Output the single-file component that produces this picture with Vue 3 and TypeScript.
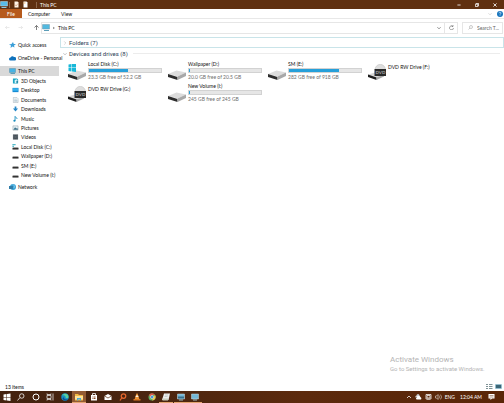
<script setup lang="ts">
import { ref } from 'vue'

interface Drive {
  name: string
  kind: 'system' | 'disk' | 'dvd'
  used?: number
  space?: string
}

const search = ref('')

const folders = [
  { name: '3D Objects', icon: 'cube' },
  { name: 'Desktop', icon: 'desktop' },
  { name: 'Documents', icon: 'doc' },
  { name: 'Downloads', icon: 'down' },
  { name: 'Music', icon: 'music' },
  { name: 'Pictures', icon: 'pic' },
  { name: 'Videos', icon: 'video' },
  { name: 'Local Disk (C:)', icon: 'sysdrive' },
  { name: 'Wallpaper (D:)', icon: 'drive' },
  { name: 'SM (E:)', icon: 'drive' },
  { name: 'New Volume (I:)', icon: 'drive' },
]

const drives: Drive[] = [
  { name: 'Local Disk (C:)', kind: 'system', used: 54, space: '23.3 GB free of 52.2 GB' },
  { name: 'Wallpaper (D:)', kind: 'disk', used: 2, space: '20.0 GB free of 20.5 GB' },
  { name: 'SM (E:)', kind: 'disk', used: 69, space: '282 GB free of 918 GB' },
  { name: 'DVD RW Drive (F:)', kind: 'dvd' },
  { name: 'DVD RW Drive (G:)', kind: 'dvd' },
  { name: 'New Volume (I:)', kind: 'disk', used: 1, space: '245 GB free of 245 GB' },
]

const apps = [
  { id: 'start', label: 'Start' },
  { id: 'search', label: 'Search' },
  { id: 'cortana', label: 'Cortana' },
  { id: 'taskview', label: 'Task View' },
  { id: 'edge', label: 'Edge' },
  { id: 'explorer', label: 'File Explorer', open: true, active: true },
  { id: 'store', label: 'Store' },
  { id: 'mail', label: 'Mail' },
  { id: 'find', label: 'Finder' },
  { id: 'vlc', label: 'Media player' },
  { id: 'chrome', label: 'Chrome' },
  { id: 'notes', label: 'Notes', open: true },
  { id: 'monitor', label: 'Monitor', open: true },
  { id: 'screen', label: 'Screen', open: true },
]
</script>

<template>
  <div class="window">
    <header class="titlebar">
      <svg class="pc" viewBox="0 0 16 14"><path d="M1 1h14v9H1z" fill="#58bce8" stroke="#b8dce9" /><path d="M3 12h10v2H3z" fill="#8fc6dc" /></svg>
      <span class="sep"></span>
      <svg class="page" viewBox="0 0 10 14"><path d="M1 1h6l2 2v10H1z" fill="#fff4e8" /><path d="M2 7l2 3 4-5" fill="none" stroke="#c8845c" /></svg>
      <svg class="page" viewBox="0 0 10 14"><path d="M1 1h6l2 2v10H1z" fill="#fff" /><path d="M1 3h4v2H1z" fill="#f2b66c" /></svg>
      <span class="sep late"></span>
      <h1>This PC</h1>
      <div class="winbtns">
        <button aria-label="Minimize"><svg viewBox="0 0 10 10"><path d="M1 5h8" /></svg></button>
        <button aria-label="Restore"><svg viewBox="0 0 10 10"><path d="M1 3h6v6H1zM3 3V1h6v6H7" /></svg></button>
        <button aria-label="Close"><svg viewBox="0 0 10 10"><path d="M1 1l8 8M9 1L1 9" /></svg></button>
      </div>
    </header>

    <nav class="tabs">
      <button class="file">File</button>
      <button>Computer</button>
      <button>View</button>
      <div class="help">
        <svg class="chev" viewBox="0 0 10 10"><path d="M1 3l4 4 4-4" fill="none" stroke="#aaa" /></svg>
        <svg class="q" viewBox="0 0 12 12"><circle cx="6" cy="6" r="6" fill="#1674bd" /><path d="M4 4.500c0-3 4-2.500 4-.2C8 6 6 5.600 6 7.400M6 8.500v1.200" fill="none" stroke="#fff" stroke-width="1.300" /></svg>
      </div>
    </nav>

    <div class="addressrow">
      <div class="arrows">
        <svg viewBox="0 0 10 10"><path d="M9 5H1l3-3M1 5l3 3" stroke="#d4d4d4" /></svg>
        <svg viewBox="0 0 10 10"><path d="M1 5h8L6 2m3 3L6 8" stroke="#d4d4d4" /></svg>
        <svg viewBox="0 0 10 10"><path d="M5 10V1L1 5m4-4l4 4" stroke="#555" stroke-width="1.500" /></svg>
      </div>
      <div class="address">
        <svg class="pc" viewBox="0 0 16 14"><path d="M1 1h14v9H1z" fill="#52b9df" stroke="#7297a8" /><path d="M4 12h10v2H4z" fill="#5b9db8" /></svg>
        <svg class="chev" viewBox="0 0 10 10"><path d="M3 2l4 3-4 3z" fill="#777" /></svg>
        <span>This PC</span>
        <button aria-label="Previous locations"><svg class="chev" viewBox="0 0 10 10"><path d="M1 3l4 4 4-4" fill="none" stroke="#444" stroke-width="1.500" /></svg></button>
      </div>
      <button class="refresh" aria-label="Refresh"><svg viewBox="0 0 10 10"><path d="M8 3a4 4 0 1 0 1 3M8 0v3H5" fill="none" stroke="#666" stroke-width="1.200" /></svg></button>
      <label class="search">
        <svg viewBox="0 0 10 10"><circle cx="6" cy="4" r="3" fill="none" stroke="#999" /><path d="M4 6L1 9" stroke="#999" /></svg>
        <input v-model="search" type="text" aria-label="Search This PC" placeholder="Search T..." />
      </label>
    </div>

    <div class="content">
      <aside>
        <a href="#" class="root"><svg viewBox="0 0 14 12"><path d="M8 0l1.500 4L14 4l-4 3 1 4-4-2-4 3 1-5-4-2 5-1z" fill="#3b9fd8" /></svg>Quick access</a>
        <a href="#" class="root"><svg viewBox="0 0 14 12"><path d="M3 11a3 3 0 0 1 0-6 4 4 0 0 1 7-1 3.500 3.500 0 0 1 2 7z" fill="#0f72bd" /></svg>OneDrive - Personal</a>
        <a href="#" class="root here"><svg viewBox="0 0 14 12"><path d="M1 1h12v8H1z" fill="#45b2e4" stroke="#5d8ea5" /><path d="M3 10h9v2H3z" fill="#5b9db8" /></svg>This PC</a>
        <div class="sub">
          <a v-for="f in folders" :key="f.name" href="#">
            <svg viewBox="0 0 14 14">
              <g v-if="f.icon === 'cube'"><path d="M1 1h9l3 2v10H1z" fill="#1aa5c4" /><path d="M5 5l4-2 4 2v6l-4 2-4-2z" fill="#d6f4fa" /><path d="M9 7v6l4-2V5z" fill="#2588a8" /></g>
              <g v-else-if="f.icon === 'desktop'"><path d="M0 2h14v10H0z" fill="#168bd4" /><path d="M1 3h12v6H1z" fill="#35b0ec" /></g>
              <g v-else-if="f.icon === 'doc'"><path d="M2 1h8l3 3v9H2z" fill="#f7fafb" stroke="#8b9ba5" /><path d="M4 5h6M4 8h7M4 10h7" stroke="#7d9eb2" /></g>
              <path v-else-if="f.icon === 'down'" d="M5 1h4v5h4l-6 7-6-7h4z" fill="#2687c8" />
              <g v-else-if="f.icon === 'music'"><path d="M6 11V1c1 3 5 3 5 6" fill="none" stroke="#168bbd" stroke-width="2" /><circle cx="4.500" cy="11" r="2.500" fill="#168bbd" /></g>
              <g v-else-if="f.icon === 'pic'"><path d="M1 2h12v10H1z" fill="#e5f0f5" stroke="#7b8c94" /><path d="M2 11l4-6 3 3 2-1 2 4z" fill="#3c718a" /></g>
              <g v-else-if="f.icon === 'video'"><path d="M1 1h12v12H1z" fill="#454e56" /><path d="M3 2v11M11 2v11" stroke="#c7cdd1" stroke-dasharray="1 1" /><path d="M5 7h4" stroke="#9daab5" /></g>
              <g v-else><path v-if="f.icon === 'sysdrive'" d="M0 0h3v3H0zM4 0h3v3H4zM0 4h3v3H0z" fill="#27a9bd" /><path d="M2 7h10l2 2v1H0V9z" fill="#bbb" /><path d="M0 9h14v4H0z" fill="#333" /></g>
            </svg>{{ f.name }}
          </a>
        </div>
        <a href="#" class="root"><svg viewBox="0 0 14 12"><circle cx="8" cy="6" r="6" fill="#3ba4d8" /><path d="M0 4h8v6H0z" fill="#317da9" /><path d="M8 1l3 3-1 4" fill="none" stroke="#bce6f7" /></svg>Network</a>
      </aside>

      <main>
        <h2 class="group boxed"><svg class="chev" viewBox="0 0 10 10"><path d="M3 1l4 4-4 4" fill="none" stroke="#999" /></svg>Folders (7)</h2>
        <h2 class="group"><svg class="chev" viewBox="0 0 10 10"><path d="M1 3l4 4 4-4" fill="none" stroke="#666" /></svg>Devices and drives (8)<span class="rule"></span></h2>
        <div class="drives">
          <article v-for="d in drives" :key="d.name" :class="{ dvd: d.kind === 'dvd' }">
            <svg class="drive" viewBox="0 0 36 32">
              <g v-if="d.kind === 'dvd'"><path d="M0 21l14-4 18 6-15 8z" fill="#d7d7d7" /><path d="M0 21l17 6v5L0 26z" fill="#1c1c1c" /><path d="M17 27l15-6v4l-15 7z" fill="#aaa" /><path d="M14 12C14-3 35-3 35 12z" fill="#dedede" stroke="#bbb" /><path d="M13 10h23v14H13z" fill="#292929" /><text x="15" y="20" font-size="9" font-weight="700" fill="#aaa">DVD</text></g>
              <g v-else><path d="M0 20l17-7 19 4-17 8z" fill="#dcdcdc" /><path d="M0 20l19 6v6L0 26z" fill="#2c2c2c" /><path d="M19 25l17-8v7l-17 8z" fill="#a8a8a8" /><path v-if="d.kind === 'system'" d="M1 1l6-1v7H1zM8 0l8-1v8H8zM1 8h6v7l-6-1zM8 8h8v8l-8-1z" fill="#18b8d9" /></g>
            </svg>
            <div class="info">
              <h3>{{ d.name }}</h3>
              <template v-if="d.space">
                <div class="bar"><div :style="{ width: d.used + '%' }"></div></div>
                <p>{{ d.space }}</p>
              </template>
            </div>
          </article>
        </div>
        <div class="activate">
          <strong>Activate Windows</strong>
          <span>Go to Settings to activate Windows.</span>
        </div>
      </main>
    </div>

    <footer class="status">
      <span>13 items</span>
      <div class="views">
        <button aria-label="Details"><svg viewBox="0 0 14 10"><path d="M0 1h4M6 1h7M0 5h4M6 5h7M0 9h4M6 9h7" stroke="#7f9296" stroke-width="2" /></svg></button>
        <button aria-label="Large icons"><svg viewBox="0 0 14 10"><path d="M1 1h12v8H1z" fill="#3c6677" stroke="#8fc7dc" /></svg></button>
      </div>
    </footer>

    <div class="taskbar">
      <button v-for="a in apps" :key="a.id" :aria-label="a.label" :class="{ open: a.open, active: a.active }">
        <svg viewBox="0 0 16 16">
          <path v-if="a.id === 'start'" d="M1 3l6-1v6H1zM8 2l7-1v7H8zM1 9h6v6l-6-1zM8 9h7v7l-7-1z" fill="#fff" />
          <g v-else-if="a.id === 'search'" fill="none" stroke="#fff" stroke-width="1.500"><circle cx="9.500" cy="6" r="4.500" /><path d="M6 9l-5 6" /></g>
          <circle v-else-if="a.id === 'cortana'" cx="8" cy="8" r="6" fill="none" stroke="#fff" stroke-width="2" />
          <path v-else-if="a.id === 'taskview'" d="M2 1v2h8V1M2 15v-2h8v2M2 5h8v6H2zM14 1v14" fill="none" stroke="#eee" stroke-width="1.500" />
          <g v-else-if="a.id === 'edge'"><circle cx="8" cy="8" r="7.500" fill="#178fc4" /><path d="M2 5c4-6 13-4 13 3 0 3-5 3-6 1 1-4-4-5-7-4z" fill="#59cf9d" /><path d="M6 8c-1 5 5 6 8 4-3 5-10 3-11-1z" fill="#0b4f91" /></g>
          <g v-else-if="a.id === 'explorer'"><path d="M0 2h6l2 2h8v11H0z" fill="#f2b944" /><path d="M0 6h16v7H0z" fill="#ffe49a" /><path d="M4 10h8v5h-2v-2H6v2H4z" fill="#4aa8d8" /></g>
          <g v-else-if="a.id === 'store'"><path d="M5 5V1h6v4" fill="none" stroke="#fff" stroke-width="1.500" /><path d="M2 4h12v11H2z" fill="#fff" /><path d="M5 7h2v2H5zM8 7h3v2H8zM5 10h2v2H5zM8 10h3v2H8z" fill="#8a4b26" /></g>
          <g v-else-if="a.id === 'mail'"><path d="M1 6l7-4 7 4v8H1z" fill="#fff" /><path d="M1 6l7 4 7-4" fill="none" stroke="#64391d" stroke-width="1.500" /></g>
          <g v-else-if="a.id === 'find'" fill="none" stroke="#e7662c" stroke-width="2.500"><circle cx="9" cy="6" r="4.500" /><path d="M6 9l-4 6" /></g>
          <g v-else-if="a.id === 'vlc'"><path d="M7 1h2l4 12H3z" fill="#ed9538" /><path d="M6 5h4l1 3H5z" fill="#fff1dc" /><path d="M1 12h14v3H1z" fill="#d87925" /></g>
          <g v-else-if="a.id === 'chrome'"><circle cx="8" cy="8" r="7" fill="#5cae61" /><path d="M2 4a7 7 0 0 1 12 0H8L5 9z" fill="#dd5647" /><path d="M14 4a7 7 0 0 1-6 11l3-6z" fill="#f0c551" /><circle cx="8" cy="8" r="3.500" fill="#e7f4ff" /><circle cx="8" cy="8" r="2.500" fill="#4d93dc" /></g>
          <g v-else-if="a.id === 'notes'"><path d="M4 1h12l-3 13H0z" fill="#eee" /><path d="M6 4h6M5 7h6" stroke="#a1b2ab" /><path d="M1 11h11v4H1z" fill="#c8cdbb" /></g>
          <g v-else><path d="M1 2h14v10H1z" fill="#74b7d6" stroke="#cbdde1" /><path v-if="a.id === 'monitor'" d="M2 7h12v4H2z" fill="#386e8b" /><path d="M4 13h8v2H4z" fill="#9db6bc" /></g>
        </svg>
      </button>
      <div class="tray">
        <svg viewBox="0 0 12 12"><path d="M2 8l4-4 4 4" fill="none" stroke="#fff" stroke-width="1.500" /></svg>
        <svg class="wide" viewBox="0 0 14 12"><path d="M1 7a3 3 0 0 1 2-4 3 3 0 0 1 6 0l2 3" fill="#ccc" /><path d="M4 11a2 2 0 0 1 0-4 3 3 0 0 1 6-1 3 3 0 0 1 2 5z" fill="#fff" /></svg>
        <svg class="wide" viewBox="0 0 14 12"><path d="M2 1h10v9H2zM4 3h6v5H4zM4 12h6" fill="none" stroke="#fff" stroke-width="1.500" /></svg>
        <svg class="wide" viewBox="0 0 14 12"><path d="M1 4h2l3-3v10L3 8H1zM8 3c2 2 2 4 0 6M10 1c4 3 4 7 0 10" fill="none" stroke="#fff" /></svg>
        <span>ENG</span>
        <time>12:04 AM</time>
        <svg class="wide" viewBox="0 0 14 12"><path d="M1 0h12v9H8l-3 3V9H1z" fill="#fff" /><path d="M3 3h8M3 6h8" stroke="#6d3c21" /></svg>
      </div>
    </div>
  </div>
</template>

<style>
body {
  margin: 0;
  background: #fff;
}
</style>

<style scoped>
* {
  box-sizing: border-box;
}
.window {
  display: flex;
  flex-direction: column;
  min-height: 100vh;
  font: 5px/8px Lato, "Liberation Sans", sans-serif;
  color: #111;
  background: #fff;
}
svg {
  display: block;
  flex: none;
}
button {
  display: flex;
  align-items: center;
  justify-content: center;
  padding: 0;
  border: 0;
  background: none;
  color: inherit;
  font: inherit;
}
a {
  color: inherit;
  text-decoration: none;
}
h1, h2, h3, p {
  margin: 0;
  font: inherit;
}
.chev {
  width: 4px;
  height: 4px;
}
.pc {
  width: 8px;
  height: 7px;
}
.titlebar {
  display: flex;
  align-items: center;
  height: 9px;
  background: #603010;
  color: #fff;
}
.titlebar .page {
  width: 5px;
  height: 7px;
  margin-left: 4px;
}
.sep {
  width: 1px;
  height: 6px;
  margin-left: 1px;
  background: #8d6549;
}
.sep.late {
  margin: 0 3px 0 8px;
}
.winbtns {
  display: flex;
  margin-left: auto;
}
.winbtns button {
  width: 18px;
  height: 9px;
}
.winbtns svg {
  width: 4px;
  height: 4px;
  fill: none;
  stroke: #fff;
  stroke-width: 2;
}
.tabs {
  display: flex;
  align-items: center;
  height: 9px;
}
.tabs button {
  height: 9px;
  margin-left: 6px;
  padding-right: 5px;
}
.tabs .file {
  width: 22px;
  margin: 0;
  padding: 0;
  background: #b65a1c;
  color: #fff;
}
.help {
  display: flex;
  align-items: center;
  gap: 5px;
  margin-left: auto;
  padding-right: 1px;
}
.q {
  width: 6px;
  height: 6px;
}
.addressrow {
  display: flex;
  align-items: center;
  height: 18px;
  padding: 0 1px 0 5px;
  border-top: 1px solid #e8e8e8;
}
.arrows {
  display: flex;
  gap: 8px;
  width: 36px;
}
.arrows svg {
  width: 5px;
  height: 5px;
  fill: none;
}
.arrows svg:last-child {
  margin-left: 3px;
}
.address {
  display: flex;
  flex: 1;
  align-items: center;
  gap: 2px;
  height: 12px;
  border: 1px solid #e6e6e6;
}
.address button {
  width: 10px;
  height: 10px;
  margin-left: auto;
}
.refresh {
  width: 13px;
  height: 12px;
  border: 1px solid #e6e6e6;
  border-left: 0;
}
.refresh svg {
  width: 5px;
  height: 5px;
}
.search {
  display: flex;
  align-items: center;
  gap: 4px;
  width: 41px;
  height: 12px;
  margin-left: 4px;
  padding-left: 5px;
  border: 1px solid #e6e6e6;
}
.search svg {
  width: 5px;
  height: 5px;
}
.search input {
  width: 26px;
  min-width: 0;
  padding: 0;
  border: 0;
  outline: 0;
  background: none;
  font: inherit;
}
.search input::placeholder {
  color: #666;
}
.content {
  display: flex;
  flex: 1;
}
aside {
  flex: none;
  width: 60px;
  padding-top: 4px;
  white-space: nowrap;
}
aside a {
  display: flex;
  align-items: center;
  gap: 2px;
}
aside .root {
  height: 10px;
  margin: 0 1px 3px 0;
  padding-left: 9px;
}
aside .root.here {
  margin-bottom: 0;
  background: #d9d9d9;
}
aside svg {
  width: 7px;
  height: 6px;
}
.sub {
  display: grid;
  grid-template-rows: repeat(11, 1fr);
  height: 104px;
  margin-bottom: 2px;
  padding-left: 12px;
}
main {
  display: flex;
  flex: 1;
  flex-direction: column;
  min-width: 0;
  padding-top: 1px;
}
.group {
  display: flex;
  align-items: center;
  gap: 2px;
  height: 11px;
  padding-left: 3px;
  color: #2c4256;
  font-family: Roboto, "Liberation Sans", sans-serif;
  font-size: 6px;
}
.group.boxed {
  padding-left: 2px;
  border: 1px solid #c9e4e9;
}
.rule {
  flex: 1;
  height: 1px;
  margin: 0 4px 0 3px;
  background: #ececec;
}
.drives {
  display: grid;
  grid-template-columns: repeat(auto-fill, 100px);
  grid-auto-rows: 22px;
  padding: 1px 0 0 8px;
}
article {
  display: flex;
  gap: 2px;
}
.drive {
  width: 18px;
  height: 16px;
  margin-top: 4px;
}
.info {
  width: 74px;
  white-space: nowrap;
}
.info h3 {
  line-height: 8px;
}
.dvd h3 {
  padding-top: 3px;
}
.bar {
  height: 5px;
  border: 1px solid #d2d2d2;
  background: #e6e6e6;
}
.bar div {
  height: 100%;
  min-width: 1px;
  background: #26a0da;
}
.info p {
  color: #6d6d6d;
}
.activate {
  display: flex;
  flex-direction: column;
  width: 114px;
  margin: auto 0 9px auto;
  color: #b4b4b4;
  font-family: Roboto, "Liberation Sans", sans-serif;
  font-size: 6px;
  line-height: 9px;
  white-space: nowrap;
}
.activate strong {
  font-size: 8px;
  font-weight: 400;
}
.status {
  display: flex;
  align-items: center;
  justify-content: space-between;
  height: 9px;
  padding: 0 2px 0 5px;
}
.views {
  display: flex;
  gap: 2px;
}
.views svg {
  width: 7px;
  height: 5px;
}
.taskbar {
  display: flex;
  height: 12px;
  background: linear-gradient(90deg, #43220f, #4a2510 30%, #5c2a0d 60%, #5a2608);
  color: #fff;
}
.taskbar button {
  width: 14px;
  height: 12px;
  margin-right: 1px;
  border-bottom: 1px solid transparent;
}
.taskbar button:nth-child(odd) {
  margin-right: 0;
}
.taskbar .open {
  border-color: #e3a46f;
}
.taskbar .active {
  background: #925b34;
}
.taskbar button svg {
  width: 8px;
  height: 8px;
}
.tray {
  display: flex;
  align-items: center;
  gap: 3px;
  margin-left: auto;
  padding-right: 9px;
}
.tray svg {
  width: 6px;
  height: 6px;
}
.tray .wide {
  width: 7px;
}
.tray time {
  margin: 0 3px 0 2px;
}
</style>
